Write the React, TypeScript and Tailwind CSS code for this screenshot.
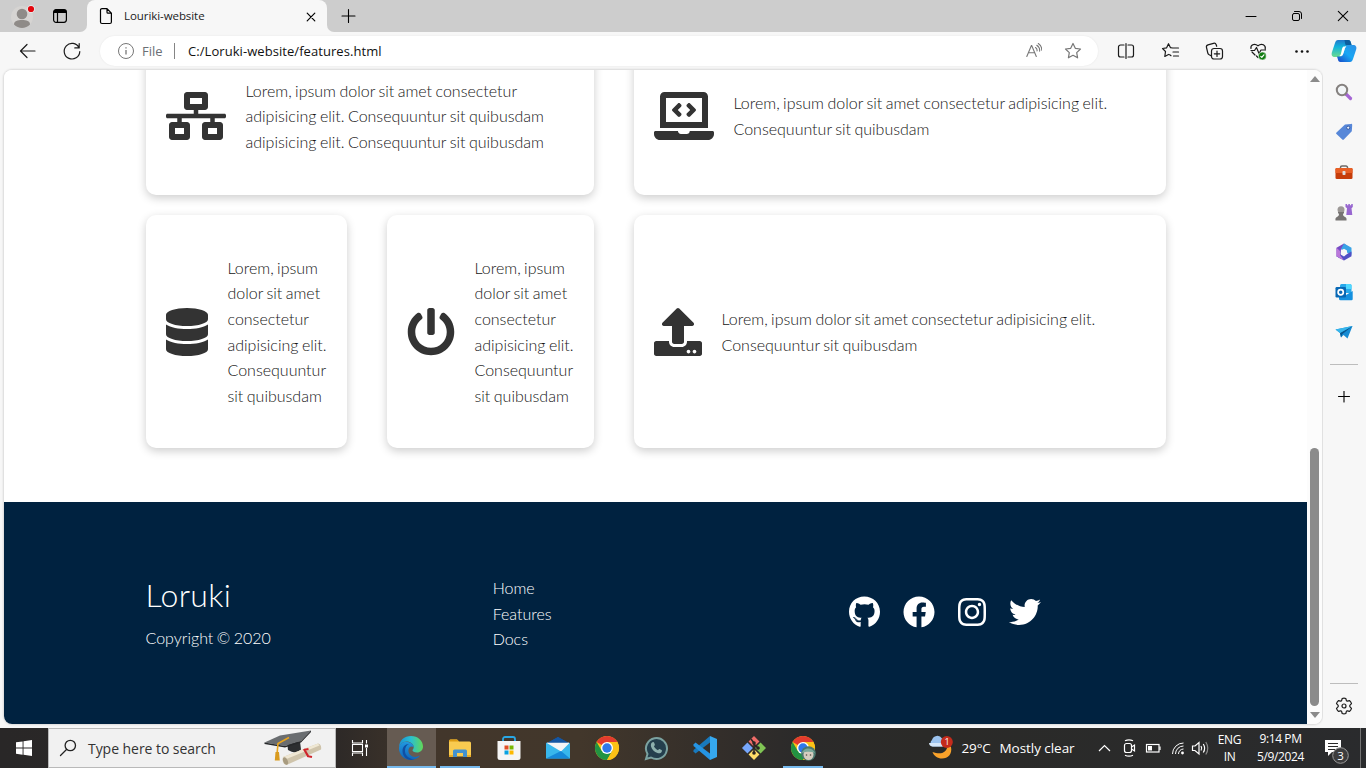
import type { ReactNode } from "react";
import {
  FaNetworkWired,
  FaLaptopCode,
  FaDatabase,
  FaPowerOff,
  FaUpload,
  FaGithub,
  FaFacebook,
  FaInstagram,
  FaTwitter,
} from "react-icons/fa";

const line = {
  fill: "none",
  stroke: "currentColor",
  strokeLinecap: "round" as const,
  strokeLinejoin: "round" as const,
};

function TabStrip() {
  return (
    <header className="flex h-8 bg-[#f7f7f7] text-black">
      <div className="flex w-[87px] items-center rounded-br-[7px] bg-[#cdcdcd]">
        <svg width="26" height="30" viewBox="0 0 26 30" className="ml-[10px]">
          <circle cx="12" cy="16" r="11" fill="#d6d4d2" />
          <circle cx="12" cy="13" r="5.300" fill="#8f8b88" />
          <path d="M4 23.500c0-3.500 3.500-4.500 8-4.500s8 1 8 4.500c-2 2.300-5 3.500-8 3.500s-6-1.200-8-3.500z" fill="#8f8b88" />
          <circle cx="21" cy="8" r="3.800" fill="#eee" />
          <circle cx="21" cy="8" r="3.100" fill="#e3060d" />
        </svg>
        <svg width="16" height="16" viewBox="0 0 16 16" className="ml-4">
          <rect x="1.600" y="1.700" width="12.800" height="12.600" rx="2.500" {...line} strokeWidth="1.200" />
          <path d="M1.500 5V4a2.500 2.500 0 0 1 2.500-2.500h8A2.500 2.500 0 0 1 14.500 4v1z" />
          <path d="M5.500 5v9" {...line} strokeWidth="1.200" />
        </svg>
      </div>
      <div className="w-60 bg-linear-to-b from-[#cdcdcd] from-50% to-[#f7f7f7] to-50%">
        <div className="flex h-8 items-center rounded-t-[8px] bg-[#f7f7f7]">
          <svg width="14" height="18" viewBox="0 0 14 18" className="ml-3">
            <path d="M3 1.600h5l4.400 4.600V15a1.500 1.500 0 0 1-1.500 1.500H3A1.500 1.500 0 0 1 1.500 15V3.100A1.500 1.500 0 0 1 3 1.600zM8 1.600v3.600a1 1 0 0 0 1 1h3.400" {...line} strokeWidth="1.200" />
          </svg>
          <span className="ml-[11px] w-[180px] font-['Open_Sans',sans-serif] text-[11.500px] tracking-[-0.070px] text-[#1b1b1b]">
            Louriki-website
          </span>
          <svg width="12" height="12" viewBox="0 0 12 12" className="mt-px ml-px">
            <path d="M2.200 2.200l7.600 7.600M9.800 2.200L2.200 9.800" {...line} strokeWidth="1.200" />
          </svg>
        </div>
      </div>
      <div className="flex grow items-center rounded-bl-[7px] bg-[#cdcdcd]">
        <svg width="16" height="16" viewBox="0 0 16 16" className="ml-[13px]">
          <path d="M8.500 1.500v13M2 8h13" {...line} strokeWidth="1.100" />
        </svg>
        <div className="grow" />
        <div className="flex w-[138px] shrink-0">
          <div className="flex w-[46px] justify-center">
            <svg width="12" height="12" viewBox="0 0 12 12"><path d="M1 6.500h10" {...line} strokeWidth="1" /></svg>
          </div>
          <div className="flex w-[46px] justify-center">
            <svg width="12" height="12" viewBox="0 0 12 12">
              <rect x="1.500" y="3.500" width="7" height="7" rx="1.500" {...line} />
              <path d="M3.500 1.500h4.500a2.500 2.500 0 0 1 2.500 2.500v4.500" {...line} />
            </svg>
          </div>
          <div className="flex w-[46px] justify-center">
            <svg width="12" height="12" viewBox="0 0 12 12"><path d="M1.300 1.300l9.400 9.400M10.700 1.300l-9.400 9.400" {...line} strokeWidth="1.100" /></svg>
          </div>
        </div>
      </div>
    </header>
  );
}

function Tool({ children }: { children: ReactNode }) {
  return (
    <div className="flex w-11 shrink-0 items-center justify-center">
      <svg width="18" height="18" viewBox="0 0 18 18" fill="none" stroke="#1b1b1b" strokeWidth="1.200" strokeLinecap="round" strokeLinejoin="round" className="overflow-visible">
        {children}
      </svg>
    </div>
  );
}

const starPath = "M9 1.500l2.300 4.800 5.200.700-3.800 3.600.900 5.200L9 13.300l-4.600 2.500.900-5.200L1.500 7l5.200-.700z";

function Toolbar() {
  return (
    <div className="flex h-[37px] bg-[#f7f7f7] pt-px pl-1.5">
      <Tool><path d="M16 9H1.500M8 2.500L1.500 9 8 15.500" /></Tool>
      <Tool><path d="M16 5.700A7.800 7.800 0 1 0 16.800 9.500M16.200 1.500v4.400h-4.400" /></Tool>
      <div className="mt-[3px] ml-1.5 flex h-[30px] w-[998px] shrink-0 items-center rounded-full bg-white pl-[18px] font-['Open_Sans',sans-serif] text-[13px] shadow-[0_0_2px_rgba(0,0,0,0.080)]">
        <svg width="16" height="16" viewBox="0 0 16 16" fill="none" stroke="#777">
          <circle cx="8" cy="8" r="7.500" />
          <path d="M8 7v4.500M8 4.300v1.200" strokeWidth="1.300" />
        </svg>
        <span className="mt-px ml-2 w-8 text-[#6b6f75]">File</span>
        <div className="h-4 w-px bg-[#858585]" />
        <span className="mt-px ml-[13px] w-[838px] tracking-[0.060px] text-[#111]">C:/Loruki-website/features.html</span>
        <svg width="16" height="16" viewBox="0 0 16 16" fill="none" stroke="#777" strokeWidth="1.100" strokeLinecap="round">
          <path d="M.8 13.500L5.400 2.500h.300l4.600 11M2.500 9.800h6M9.500 4.500c1.300.9 1.800 2.200 1.500 3.500M10.800 2.300c2.300 1.500 3.100 3.600 2.800 6M12.300.5c2.500 1.700 3.600 4 3.400 6.800" />
        </svg>
        <svg width="18" height="18" viewBox="0 0 18 18" fill="none" stroke="#777" strokeWidth="1.200" strokeLinejoin="round" className="ml-[22px]">
          <path d={starPath} />
        </svg>
      </div>
      <div className="w-[5.500px] shrink-0" />
      <Tool>
        <path d="M7 3H3.500A2 2 0 0 0 1.500 5v8a2 2 0 0 0 2 2H7M11 3h3.500a2 2 0 0 1 2 2v8a2 2 0 0 1-2 2H11M9 1.500v15" />
      </Tool>
      <Tool>
        <path d="M11.500 6L9.500 5.700 7.500 1.700 5.500 5.900 1.500 6.500l3 3-.7 5 3.700-2M8.700 12.700l1.300 1M12 6H17.500M12 10H17.500M12.500 14h5" />
      </Tool>
      <Tool>
        <rect x="6.500" y="6.500" width="11" height="10.500" rx="2.500" />
        <path d="M12 9v5.500M9.300 11.800h5.400M6.500 14L3.800 12.500a2.500 2.500 0 0 1-1-1.500L1.500 5.500A2.200 2.200 0 0 1 3 2.800L8.500 1.300a2.200 2.200 0 0 1 2.700 1.500l.5 1.500" />
      </Tool>
      <Tool>
        <path d="M9 15.500L7.500 14M2 8.500H5.500l2-3 2.500 6 2-3.500h4.500M2 6.500c-.700-3 3-6 7-2.700 4-3.300 8-.300 7.200 3.200M3 10l3 3" />
        <circle cx="13.300" cy="14" r="4" fill="#107c10" stroke="#f7f7f7" strokeWidth=".6" />
        <path d="M11.800 14.400l1 .9 2.100-2.500" stroke="#fff" />
      </Tool>
      <Tool>
        <g fill="#111" stroke="none"><circle cx="3.500" cy="9.500" r="1.300" /><circle cx="9" cy="9.500" r="1.300" /><circle cx="14.500" cy="9.500" r="1.300" /></g>
      </Tool>
      <div className="flex w-10 shrink-0 items-center justify-center">
        <svg width="26" height="24" viewBox="0 0 26 24">
          <defs>
            <linearGradient id="cpA" x1="0" y1="0" x2="0" y2="1"><stop stopColor="#2277c9" /><stop offset=".4" stopColor="#11b2dc" /><stop offset="1" stopColor="#6bdc8f" /></linearGradient>
            <linearGradient id="cpB" x1="1" y1="0" x2="0" y2="1"><stop stopColor="#2d8fe5" /><stop offset=".5" stopColor="#18a7f4" /><stop offset="1" stopColor="#1743c4" /></linearGradient>
          </defs>
          <path d="M7 1h10c2 0 2.500 1 3 3l.7 2.500h-4c-2 0-2.600 1-3 2.500l-2 6c-.6 2-1.500 3-3.700 3H4c-3 0-4-2-3-5L4 4c.6-2 1.500-3 3-3z" fill="url(#cpA)" />
          <path d="M13.500 1H17c2 0 2.500 1 3 3l.7 2.500h-4c-2 0-2.300-.5-2.600-2z" fill="#0b5e9e" />
          <path d="M19 23H9.500c-1.700 0-2.300-1-2.700-3L6 17.500h3c2 0 2.500-1 3-2.500l2-6c.6-2 1.500-3 3.700-3H22c3 0 4 2 3 5l-3 9c-.6 2-1.500 3-3 3z" fill="url(#cpB)" />
          <path d="M12.500 7.500h3c-1 .5-1.400 1.300-1.800 2.500l-1.400 4.500c-.3 1-.9 2-2 2.500h-2c1-.6 1.400-1.500 1.700-2.500L11 10c.3-1 .7-2 1.500-2.500z" fill="#fff" />
        </svg>
      </div>
    </div>
  );
}

function Card({ icon, children }: { icon: ReactNode; children: ReactNode }) {
  return (
    <article className="flex items-center rounded-[10px] bg-white px-5 shadow-[0_3px_10px_rgba(0,0,0,0.200)]">
      {icon}
      <p className="ml-5 whitespace-nowrap text-[#161616]">{children}</p>
    </article>
  );
}

function WebPage() {
  return (
    <main className="flex h-[654px] w-[1303px] flex-col overflow-hidden bg-white font-['Lato',sans-serif] text-base leading-[25.600px] font-light [word-spacing:-0.900px] text-[#333]">
      <section className="mx-[141.500px] -mt-[33px] flex h-[411px] shrink-0 flex-col gap-5">
        <div className="grid h-[158px] grid-cols-[448px_532px] gap-x-10">
          <Card icon={<FaNetworkWired className="h-12 w-[60px] shrink-0" />}>
            Lorem, ipsum dolor sit amet consectetur<br />
            adipisicing elit. Consequuntur sit quibusdam<br />
            adipisicing elit. Consequuntur sit quibusdam
          </Card>
          <Card icon={<FaLaptopCode className="h-12 w-[60px] shrink-0" />}>
            Lorem, ipsum dolor sit amet consectetur adipisicing elit.<br />
            Consequuntur sit quibusdam
          </Card>
        </div>
        <div className="grid h-[233px] grid-cols-[201px_207px_532px] gap-x-10">
          <Card icon={<FaDatabase className="h-12 w-[42px] shrink-0" />}>
            Lorem, ipsum<br />dolor sit amet<br />consectetur<br />adipisicing elit.<br />Consequuntur<br />sit quibusdam
          </Card>
          <Card icon={<FaPowerOff className="h-12 w-12 shrink-0" />}>
            Lorem, ipsum<br />dolor sit amet<br />consectetur<br />adipisicing elit.<br />Consequuntur<br />sit quibusdam
          </Card>
          <Card icon={<FaUpload className="h-12 w-12 shrink-0" />}>
            Lorem, ipsum dolor sit amet consectetur adipisicing elit.<br />
            Consequuntur sit quibusdam
          </Card>
        </div>
      </section>
      <footer className="mt-[54px] grid h-[222px] shrink-0 grid-cols-3 gap-5 bg-[#002240] px-[141.500px] pt-[73px] text-white">
        <div className="pt-px">
          <h1 className="text-[32px] leading-[38.400px] font-light tracking-[0.350px]">Loruki</h1>
          <p className="mt-[11px]">Copyright © 2020</p>
        </div>
        <nav className="flex flex-col pl-[0.500px]">
          <a>Home</a>
          <a>Features</a>
          <a>Docs</a>
        </nav>
        <div className="flex h-[74px] items-center pl-[10px]">
          <FaGithub className="h-8 w-[31px]" />
          <FaFacebook className="ml-[23.500px] h-8 w-8" />
          <FaInstagram className="ml-[22.500px] h-8 w-7" />
          <FaTwitter className="ml-[23px] h-8 w-8" />
        </div>
      </footer>
    </main>
  );
}

function Scrollbar() {
  return (
    <div className="flex w-[15px] flex-col items-center bg-[#fcfcfc]">
      <svg width="10" height="6" viewBox="0 0 10 6" className="mt-[6px]"><path d="M5 0l5 6H0z" fill="#8b8b8b" /></svg>
      <div className="mt-[366px] h-[258px] w-[9px] rounded-full bg-[#8b8b8b]" />
      <svg width="10" height="6" viewBox="0 0 10 6" className="mt-[6px]"><path d="M5 6L0 0h10z" fill="#8b8b8b" /></svg>
    </div>
  );
}

function SideIcon({ children }: { children: ReactNode }) {
  return (
    <div className="flex h-10 items-center justify-center">
      <svg width="18" height="18" viewBox="0 0 18 18" className="overflow-visible">{children}</svg>
    </div>
  );
}

function Sidebar() {
  return (
    <aside className="flex w-[43px] shrink-0 flex-col bg-[#f7f7f7] pt-[2px] pr-[2px]">
      <SideIcon>
        <path d="M11 11l4.500 4.500" stroke="#a566d4" strokeWidth="3.200" strokeLinecap="round" />
        <circle cx="7" cy="7" r="5.200" fill="#f2f5f7" stroke="#85817f" strokeWidth="2" />
      </SideIcon>
      <SideIcon>
        <path d="M10 1.500l6-.6a1 1 0 0 1 1.200 1l-.4 6.400-8 8.200c-.6.600-1 .5-1.500 0L1.500 11c-.5-.5-.6-1 0-1.500z" fill="#5787d8" />
        <circle cx="13.200" cy="4.700" r="1.600" fill="#e9f1fc" stroke="#345aa6" />
      </SideIcon>
      <SideIcon>
        <path d="M5.500 6V4.500a1.500 1.500 0 0 1 1.500-1.500h4a1.500 1.500 0 0 1 1.500 1.500V6" fill="none" stroke="#6d6967" strokeWidth="1.500" />
        <rect x=".5" y="5" width="17" height="11" rx="1.300" fill="#c63d0a" />
        <path d="M.5 10V6.200A1.200 1.200 0 0 1 1.700 5h14.600a1.200 1.200 0 0 1 1.200 1.200V10z" fill="#e85f25" />
        <rect x="7.500" y="8" width="3" height="4" rx=".8" fill="#dedede" />
      </SideIcon>
      <SideIcon>
        <path d="M10.500 1v3l1.500 1.200-.7 6.800h6L16.500 5.200 17.800 4V1h-1.600v1.200h-1.300V1h-1.600v1.200h-1.200V1z" fill="#9867d0" />
        <circle cx="6" cy="6.700" r="3.500" fill="#9c9896" />
        <path d="M3 9h6v1.500H8c0 2 .4 2.500 2 3.500 1.500.5 1.700 1.500 1.500 3.500H.5C.3 15.500.500 14.500 2 14c1.500-1 2-1.500 2-3.500H3z" fill="#777473" />
      </SideIcon>
      <SideIcon>
        <path d="M9 .5L1.500 4.800v8.500l3.800 2.200L6 6.500 14 4z" fill="#754bc4" />
        <path d="M9 .5l7.500 4.300v7L12 9.500 6 6z" fill="#39a3e6" />
        <path d="M5.300 15.500L9 17.500l7.500-4.300V8.500L12 11l-3 2.500-5-3-2.500 2.800z" fill="#514fc4" />
        <path d="M1.500 4.800L5 8v4l4 5.500-7.500-4.200z" fill="#bb78da" />
        <path d="M9 5.700l3 1.700v3.400l-3 1.700-3-1.700V7.400z" fill="#f7f7f7" />
      </SideIcon>
      <SideIcon>
        <path d="M5 2.500A1.500 1.500 0 0 1 6.500 1H15a1.500 1.500 0 0 1 1.500 1.500V10H5z" fill="#28a8ea" />
        <path d="M11 1h4a1.500 1.500 0 0 1 1.500 1.500V6H11z" fill="#50d9ff" />
        <path d="M4 9l7 3 6.700-4v8a1.200 1.200 0 0 1-1.200 1.200h-11A1.500 1.500 0 0 1 4 15.700z" fill="#1490df" />
        <rect x=".5" y="4" width="10.500" height="10.500" rx="1.200" fill="#0868b5" />
        <circle cx="5.700" cy="9.200" r="2.600" fill="none" stroke="#fff" strokeWidth="1.700" />
      </SideIcon>
      <SideIcon>
        <path d="M.5 6.500L17.500 3l-5 12.500L8.500 12 6 14.500 5 10z" fill="#168bd3" />
        <path d="M5 10L17.500 3 7.200 11.300 6 14.500z" fill="#07558e" />
        <path d="M.5 6.500L17.500 3 5 10z" fill="#37b6ec" />
      </SideIcon>
      <div className="mr-[6px] ml-[7px] mt-[12px] h-px bg-[#bdbdbd]" />
      <div className="mt-[26px] flex justify-center">
        <svg width="12" height="12" viewBox="0 0 12 12"><path d="M6 0v11M.5 5.500h11" {...line} strokeWidth="1.100" /></svg>
      </div>
      <div className="mr-[6px] ml-[7px] mt-[280px] h-px bg-[#bdbdbd]" />
      <div className="mt-[13px] flex justify-center">
        <svg width="18" height="18" viewBox="0 0 18 18" fill="none" stroke="#1b1b1b" strokeWidth="1.200" strokeLinejoin="round">
          <path d="M7.200 1.500Q9 .7 10.800 1.500L11.400 3.700L12.300 4.200L14.600 3.600Q16 4.900 16.500 6.700L14.800 8.400V9.600L16.500 11.300Q16 13.100 14.600 14.400L12.300 13.800L11.400 14.300L10.800 16.500Q9 17.300 7.200 16.500L6.600 14.300L5.700 13.800L3.400 14.400Q2 13.100 1.500 11.300L3.200 9.600V8.400L1.500 6.700Q2 4.900 3.400 3.600L5.700 4.200L6.600 3.700z" />
          <circle cx="9" cy="9" r="2" />
        </svg>
      </div>
    </aside>
  );
}

function App32({ children, running, active }: { children: ReactNode; running?: boolean; active?: boolean }) {
  return (
    <div className={active ? "flex w-[49px] flex-col items-center bg-[#665b52]" : "flex w-[49px] flex-col items-center"}>
      <svg width="26" height="26" viewBox="0 0 26 26" className="mt-[7px] mb-[5px]">{children}</svg>
      {running && <div className={active ? "h-[2px] w-full bg-[#76b9ed]" : "h-[2px] w-10 bg-[#76b9ed]"} />}
    </div>
  );
}

function ChromeMark() {
  return (
    <>
      <circle cx="13" cy="13" r="12" fill="#fbc116" />
      <path d="M13 13L2.600 7A12 12 0 0 1 23.400 7z" fill="#e33b2e" />
      <path d="M2.600 7A12 12 0 0 0 13 25l5.200-9L13 13 7.800 16z" fill="#229342" />
      <path d="M13 7h10.400A12 12 0 0 1 13 25l5.200-9z" fill="#fbc116" />
      <circle cx="13" cy="13" r="6" fill="#fff" />
      <circle cx="13" cy="13" r="4.700" fill="#2f78ea" />
    </>
  );
}

function SearchBox() {
  return (
    <div className="flex w-72 shrink-0 items-center border border-[#b9b9b9] bg-[#f1f1f1]">
      <svg width="18" height="18" viewBox="0 0 18 18" className="ml-[10px] text-[#222]">
        <circle cx="11.300" cy="6.500" r="5.200" {...line} strokeWidth="1.300" />
        <path d="M7.500 10.500L1.500 16.500" {...line} strokeWidth="1.300" />
      </svg>
      <span className="ml-[11px] w-44 font-['Open_Sans',sans-serif] text-[14px] tracking-[-0.050px] text-[#333]">Type here to search</span>
      <svg width="58" height="38" viewBox="0 0 58 38" className="shrink-0">
        <path d="M23 12l1 9q8 5 13-.500l-1-8z" fill="#2c2e30" />
        <path d="M.5 13.500L16 6.500 47 1.500 37 12 21 17z" fill="#6a6d70" />
        <path d="M.5 13.500L21 17l16-5 10-10.500V3L37 13.500 21 18.500.5 15z" fill="#26282a" />
        <path d="M25 8.500l-11 6-1 11" fill="none" stroke="#e9a51d" strokeWidth="1.600" />
        <path d="M11.500 23h3.500l.8 8.500h-5z" fill="#d99b20" />
        <path d="M19 28L54 14.500q4 1 3 6L22.500 36q-5-1-3.500-8z" fill="#cfc4ab" />
        <path d="M19 28L54 14.500l1.500 2L20 31z" fill="#efe7d3" />
        <ellipse cx="21.500" cy="32" rx="2.200" ry="4" fill="#a89b80" transform="rotate(-22 21.500 32)" />
        <path d="M40 20l4 7M39.500 21l5-1M43 27l5 1" stroke="#cf252c" strokeWidth="2.200" />
      </svg>
    </div>
  );
}

function Taskbar() {
  return (
    <footer className="flex h-10 shrink-0 bg-[linear-gradient(90deg,#292727_0,#2d2927_336px,#42362b_430px,#42372b_580px,#332e2a_720px,#2b2a2a_800px,#2a2a28_930px,#2a2b2d_1372px)] font-['Open_Sans',sans-serif] text-white">
      <div className="flex w-12 shrink-0 items-center justify-center">
        <svg width="16" height="16" viewBox="0 0 16 16" fill="#fff"><path d="M0 2.300L6.600 1.400V7.600H0zM7.500 1.200L16 0v7.600H7.500zM0 8.400h6.600v6.300L0 13.800zM7.500 8.400H16V16l-8.500-1.200z" /></svg>
      </div>
      <SearchBox />
      <div className="flex w-[50.500px] shrink-0 items-center justify-center">
        <svg width="18" height="18" viewBox="0 0 18 18" fill="none" stroke="#fff" strokeWidth="1.100" className="-ml-0.5">
          <path d="M1.500 1v3h10V1M1.500 17v-3h10v3M1.500 5.500h10v7h-10zM15.500 1v3.500M15.500 9v8" />
          <rect x="14" y="5.500" width="3" height="3" fill="#fff" stroke="none" />
        </svg>
      </div>
      <App32 active running>
        <defs>
          <linearGradient id="eA" x1="0" x2="1"><stop stopColor="#1893d8" /><stop offset=".5" stopColor="#2abfd0" /><stop offset="1" stopColor="#62d957" /></linearGradient>
          <linearGradient id="eB" x1="0" y1="0" x2="0" y2="1"><stop stopColor="#2199df" /><stop offset="1" stopColor="#1064b8" /></linearGradient>
        </defs>
        <path d="M1 13C1 5 6.500 1 13 1c7 0 12 5 12 10.500 0 3.500-2.500 6-6 6-3 0-4.500-1.300-4.500-2.300 0-.8 1.200-1.200 1.200-3C15.700 9 12.500 6.500 8.500 6.500 4.500 6.500 1.500 9.500 1 13z" fill="url(#eA)" />
        <path d="M1 13C1.500 9 4.500 6.700 8 6.700c4 0 7.600 2.300 7.700 5.500-1.700-1.700-5.300-.7-5.300 3.500 0 4.500 5.500 8.300 11.600 4.900C20.500 23 17 25 13 25 6 25 .8 19.500 1 13z" fill="url(#eB)" />
        <path d="M7 16c0-3.500 1.500-6 4-7-4 0-6.500 3-6.500 7 0 5 4 9 8.500 9 1.500 0 2.500-.2 3.500-.5C11 24 7 20.500 7 16z" fill="#104fa3" />
      </App32>
      <App32 running>
        <path d="M2 6a1.500 1.500 0 0 1 1.500-1.500H10l2 2h10.500A1.500 1.500 0 0 1 24 8v13.500H2z" fill="#f9cb50" />
        <path d="M2 6a1.500 1.500 0 0 1 1.500-1.500H10l2 2H2z" fill="#dd9c13" />
        <path d="M6 22v-6a1.500 1.500 0 0 1 1.500-1.500h11A1.500 1.500 0 0 1 20 16v6h-4v-4h-6v4z" fill="#4291cf" />
        <path d="M2 20h4v2H2zM20 20h4v2h-4z" fill="#e7aa25" />
      </App32>
      <App32>
        <path d="M7 8V4a2 2 0 0 1 2-2h8a2 2 0 0 1 2 2v4" fill="none" stroke="#29a7e4" strokeWidth="1.800" />
        <path d="M1.500 6h23v16.500a2.500 2.500 0 0 1-2.500 2.500H4a2.500 2.500 0 0 1-2.500-2.500z" fill="#f5f5f5" />
        <path d="M7 6h1V5H7zM18 6h2V5h-2z" fill="#29a7e4" />
        <path d="M8.500 10.500h4v4h-4z" fill="#e14e24" /><path d="M13.500 10.500h4v4h-4z" fill="#78b800" /><path d="M8.500 15.500h4v4h-4z" fill="#08a2e2" /><path d="M13.500 15.500h4v4h-4z" fill="#fdb900" />
      </App32>
      <App32>
        <path d="M1 9l12-7 12 7v5H1z" fill="#1456a3" />
        <path d="M2 7.500h22v11H2z" fill="#f3f4f6" />
        <path d="M1 8.500L13 2l12 6.500-1 1V7.500H2v2z" fill="#1456a3" />
        <path d="M1 7.500L16 16.500 25 7.500v16H1z" fill="#38b7ec" />
        <path d="M1 23.500L16 16l9 7.500z" fill="#1689d9" />
      </App32>
      <App32><ChromeMark /></App32>
      <App32>
        <path d="M3 24l1.500-5A10.500 10.500 0 1 1 8 22.500z" fill="#243f4d" stroke="#7ba2a0" strokeWidth="2" />
        <path d="M9 7.500c1-1 2-.5 2.300.5l.6 1.700c0 .7-.6 1.100-1 1.600.9 1.900 2.200 3 4.100 3.900.5-.5.9-1.200 1.500-1.100l2 .9c.6.400.5 1 .2 1.800-.8 1.700-2.800 1.700-4.200 1.200-3.400-1.200-5.500-3.500-6.400-6.300-.4-1.500-.3-3.200.9-4.200z" fill="#8db0ad" />
      </App32>
      <App32>
        <path d="M1.500 16.500L3.500 18.500 18 7.500V1L1.500 15z" fill="#1879bd" />
        <path d="M1.500 9.500L3.500 7.500 18 18.500V25L1.500 11z" fill="#2594e3" />
        <path d="M18 1l7 3v18l-7 3z" fill="#36a8ee" />
      </App32>
      <App32>
        <g transform="rotate(45 13 13)">
          <path d="M4.500 4.500h7.700v7.700H4.500z" fill="#f06c68" /><path d="M13.800 4.500h7.700v7.700h-7.700z" fill="#80c454" /><path d="M4.500 13.800h7.700v7.700H4.500z" fill="#76a6fb" /><path d="M13.800 13.800h7.700v7.700h-7.700z" fill="#ffdd69" />
        </g>
        <path d="M10 4l3 4v11M13 9l5 5" stroke="#2b2522" strokeWidth="1.500" fill="none" />
        <circle cx="13" cy="8" r="1.800" fill="#2b2522" /><circle cx="17" cy="13" r="1.800" fill="#2b2522" /><circle cx="13" cy="18" r="1.800" fill="#2b2522" />
      </App32>
      <App32 running>
        <ChromeMark />
        <circle cx="18.500" cy="18.500" r="7.300" fill="#49766d" />
        <ellipse cx="18.500" cy="19.500" rx="5" ry="5.500" fill="#d5cdbf" />
        <path d="M12 18c1-5 10-7 13 0-4-1.500-8-2-13 0z" fill="#7ba99b" />
        <circle cx="16.500" cy="20" r=".8" fill="#554a40" /><circle cx="20.500" cy="20" r=".8" fill="#554a40" />
      </App32>
      <div className="ml-[100.500px] flex w-[33.500px] items-center">
        <svg width="26" height="26" viewBox="0 0 26 26">
          <path d="M23 12c1.500 7-3 11.500-9 11.500-4.500 0-8-2.500-9.500-6.500 8 3 14 1 15-6z" fill="#f9a22a" />
          <path d="M4.500 11.500A4 4 0 0 1 4 5a5.500 5.500 0 0 1 10-1.500A4.500 4.500 0 0 1 15 11.500z" fill="#9cc3ee" />
          <path d="M4.500 11.500A4 4 0 0 1 1 8h15c0 2-.5 3.500-2 3.500z" fill="#d6e7f9" />
          <circle cx="18.800" cy="7" r="6" fill="#c42b1c" />
          <text x="16.500" y="10.300" fontSize="9" fill="#fff" className="font-['Open_Sans',sans-serif]">1</text>
        </svg>
      </div>
      <span className="w-[38px] self-center text-[13.500px] tracking-[-0.150px] whitespace-nowrap">29°C</span>
      <span className="w-[95px] self-center text-[13.500px] tracking-[-0.050px] whitespace-nowrap">Mostly clear</span>
      <div className="flex w-[120px] shrink-0 items-center">
        <svg width="120" height="20" viewBox="0 0 120 20" fill="none" stroke="#fff" strokeWidth="1.200">
          <path d="M4 13l5.500-5.500L15 13" />
          <rect x="29.500" y="5.500" width="7" height="9" rx="2" />
          <path d="M36.500 9l3-2v6l-3-2M30 2.800q4-2 8 0M30 17.200q4 2 8 0" />
          <rect x="51.500" y="6.500" width="12.500" height="7.500" />
          <path d="M53 8h4v4.500h-4z" fill="#fff" stroke="none" /><path d="M65 8.500v3.500" />
          <path d="M77.500 16a11 11 0 0 1 11-11M80.500 16a8 8 0 0 1 8-8M83.500 16a5 5 0 0 1 5-5" strokeWidth="1" />
          <circle cx="87.500" cy="15" r="1.400" fill="#fff" stroke="none" />
          <path d="M97.500 8v4.500h2.500l4 3.500V4.500L100 8zM106 8q1.500 2.300 0 4.500M108.300 6q2.700 4.200 0 8.500" />
          <path d="M110.800 4q4 6.200 0 12.500" stroke="#888" />
        </svg>
      </div>
      <div className="ml-px flex w-[28px] shrink-0 flex-col items-center pt-[3px] text-[12px] leading-[17px] tracking-[-0.350px]">
        <span>ENG</span><span>IN</span>
      </div>
      <div className="ml-[9px] flex w-[56px] shrink-0 flex-col items-center pt-[2px] text-[12px] leading-[18px] tracking-[-0.400px] whitespace-nowrap">
        <span>9:14 PM</span><span>5/9/2024</span>
      </div>
      <svg width="28" height="28" viewBox="0 0 28 28" className="mt-[9px] ml-[14px] shrink-0">
        <path d="M2 3h16v12H9l-4 4v-4H2z" fill="#fff" />
        <path d="M5 6.500h10M5 9.500h10M5 12.500h7" stroke="#2b2b2b" />
        <circle cx="17.500" cy="18.500" r="7.800" fill="#3c3c3d" stroke="#999" />
        <text x="14.300" y="22.500" fontSize="11.500" fill="#fff" className="font-['Open_Sans',sans-serif]">3</text>
      </svg>
      <div className="ml-[9px] w-px bg-[#737373]" />
    </footer>
  );
}

export default function App() {
  return (
    <div className="flex h-screen w-screen flex-col overflow-hidden bg-white">
      <div className="flex h-[768px] w-[1366px] flex-col overflow-hidden bg-[#f7f7f7]">
        <TabStrip />
        <Toolbar />
        <div className="flex h-[659px] shrink-0 pt-px pl-1">
          <div className="mr-px flex h-[654px] w-[1318px] shrink-0 overflow-hidden rounded-[8px] bg-[#fcfcfc] shadow-[0_0_2px_1px_rgba(0,0,0,0.120)]">
            <WebPage />
            <Scrollbar />
          </div>
          <Sidebar />
        </div>
        <Taskbar />
      </div>
    </div>
  );
}
